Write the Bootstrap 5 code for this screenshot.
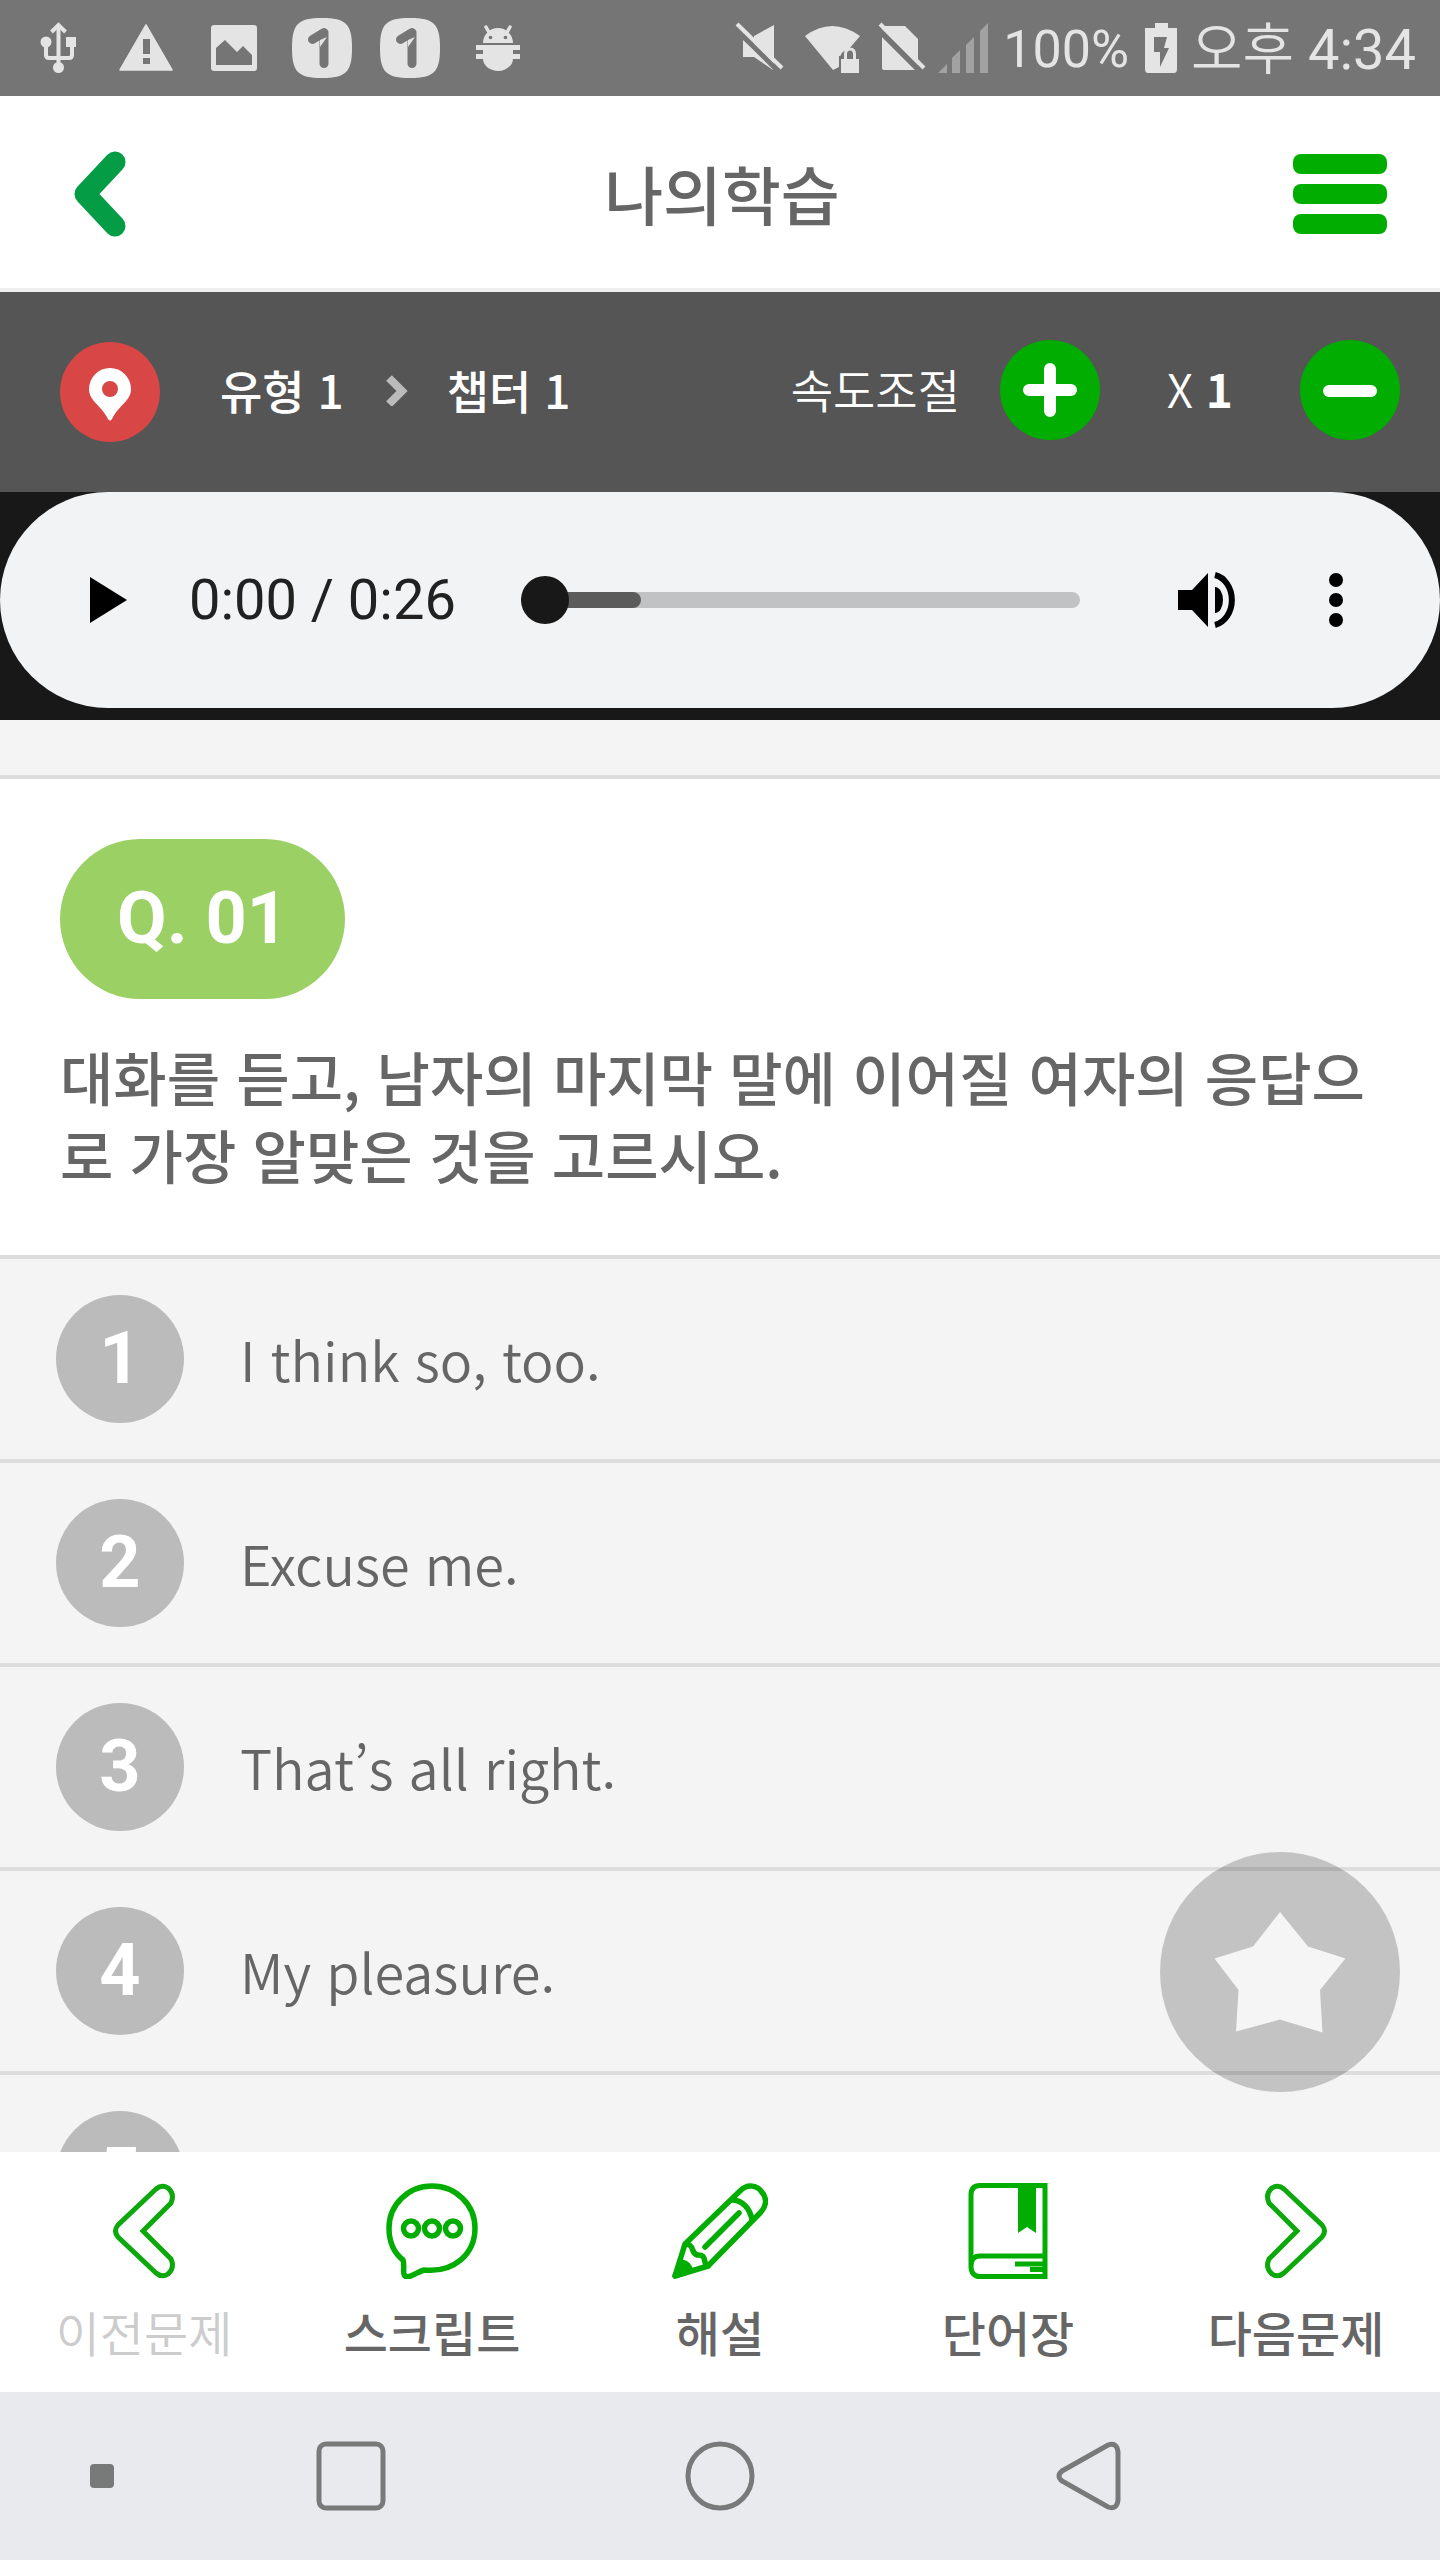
<!DOCTYPE html>
<html lang="ko">
<head>
<meta charset="utf-8">
<meta name="viewport" content="width=device-width, initial-scale=1">
<title>나의학습</title>
<link href="https://cdn.jsdelivr.net/npm/bootstrap@5.3.0/dist/css/bootstrap.min.css" rel="stylesheet">
<style>
  :root { --ink: #666; --line: #ddd; --soft: #f4f4f4; }
  body { font-family: "Noto Sans CJK KR", "Noto Sans", sans-serif; color: var(--ink); background: var(--soft); }
  svg { display: block; flex: none; }
  .statusbar { height: 96px; padding: 0 24px 0 28px; background: #757575; color: #e4e4e4; font-family: Roboto, "Noto Sans CJK KR", sans-serif; }
  .status-left { gap: 28px; }
  .battery-text { font-size: 52px; line-height: 60px; padding-top: 4px; margin: 0 14px; }
  .clock { font-size: 56px; line-height: 60px; font-weight: 400; padding-top: 4px; margin-left: 12px; }
  .clock span { font-weight: 350; }
  .titlebar { height: 196px; padding: 0 50px; border-bottom: 4px solid #efefef; }
  .titlebar h1 { font-size: 64px; line-height: 96px; font-weight: 500; }
  .locbar { height: 200px; padding: 0 40px 0 60px; background: #555; font-size: 46px; line-height: 72px; }
  .crumb-list { gap: 38px; font-weight: 500; margin-left: 60px; padding-bottom: 6px; }
  .speed { font-weight: 350; padding-bottom: 4px; }
  .speed-value { width: 200px; }
  .speed-label, .speed-value { padding-bottom: 4px; }
  .speed-label { margin-right: 40px; }
  .audio-wrap { background: #181818; padding-bottom: 12px; }
  .audio-pill { height: 216px; background: #f1f3f4; padding: 0 68px 0 72px; }
  .audio-time { font: 400 56px/64px Roboto, sans-serif; color: #212121; margin: 0 65px 0 45px; }
  .seek { height: 48px; margin-right: 84px; }
  .seek .progress { height: 16px; border-radius: 8px; background: #c1c2c4; }
  .seek .progress-bar { background: #5b5b5b; border-radius: 8px; }
  .seek input { position: absolute; inset: 0; width: 100%; height: 48px; margin: 0; appearance: none; background: transparent; }
  .seek input::-webkit-slider-thumb { appearance: none; width: 48px; height: 48px; border-radius: 50%; background: #181818; }
  .lesson { min-height: 0; }
  .question { margin-top: 55px; padding: 60px 40px 62px 60px; background: #fff; border-top: 4px solid var(--line); border-bottom: 4px solid var(--line); }
  .qno { height: 160px; padding: 0 57px; border-radius: 80px; background: #9ad064; color: #fff; font: 700 72px/160px Roboto, sans-serif; }
  .question p { font-size: 58px; line-height: 78px; font-weight: 500; margin: 38px 0 0; }
  .choice { height: 204px; padding: 0 56px; gap: 56px; background: var(--soft); border: 0; border-bottom: 4px solid var(--line); border-radius: 0; font-size: 54px; line-height: 72px; font-weight: 350; color: var(--ink); }
  .num { width: 128px; height: 128px; background: #bbb; color: #fff; font: 700 72px/128px Roboto, sans-serif; flex: none; }
  .fav { position: absolute; right: 40px; bottom: 60px; }
  .toolbar-item { padding: 31px 0 0; color: var(--ink); font-size: 48px; line-height: 72px; font-weight: 500; gap: 16px; }
  .toolbar-item.off { color: #ccc; font-weight: 350; }
  .tools { height: 240px; }
  .sysnav { height: 168px; background: #e9eaed; display: grid; grid-template-columns: 204fr 294fr 444fr 294fr 204fr; }
</style>
<script src="https://cdn.jsdelivr.net/npm/bootstrap@5.3.0/dist/js/bootstrap.bundle.min.js"></script>
</head>
<body>
<div class="d-flex flex-column vh-100 overflow-hidden">

  <div class="statusbar d-flex align-items-center justify-content-between flex-shrink-0">
    <div class="status-left d-flex">
      <!-- usb -->
      <svg width="60" height="60" fill="#e4e4e4"><g fill="none" stroke="#e4e4e4" stroke-width="4"><path d="M30.500 50V10M18 28v9q0 3 3 3h20q3 0 3-3v-9"/><path d="M23.500 14l7-7 7 7"/></g><circle cx="18" cy="24" r="5.500"/><path d="M38 19h10v10H38z"/><circle cx="30.500" cy="49.500" r="5.500"/></svg>
      <!-- warning -->
      <svg width="60" height="60"><path d="M30 7L56 52H4z" fill="#e4e4e4" stroke="#e4e4e4" stroke-width="1.500" stroke-linejoin="round"/><path d="M27 21h7v15h-7zM27 40h7v6h-7z" fill="#757575"/></svg>
      <!-- picture -->
      <svg width="60" height="60"><rect x="7" y="7" width="46" height="46" rx="3" fill="#e4e4e4"/><path d="M12 47V30l9-8 12 12 6-6 9 9v10z" fill="#757575"/></svg>
      <svg width="60" height="60"><path d="M30 0C54 0 60 6 60 30S54 60 30 60 0 54 0 30 6 0 30 0z" fill="#e4e4e4"/><path d="M20.500 21.500L32 14.500V45.500" fill="none" stroke="#757575" stroke-width="9" stroke-linecap="round" stroke-linejoin="round"/><path d="M35 19L28 29v-7z" fill="#e4e4e4"/></svg>
      <svg width="60" height="60"><path d="M30 0C54 0 60 6 60 30S54 60 30 60 0 54 0 30 6 0 30 0z" fill="#e4e4e4"/><path d="M20.500 21.500L32 14.500V45.500" fill="none" stroke="#757575" stroke-width="9" stroke-linecap="round" stroke-linejoin="round"/><path d="M35 19L28 29v-7z" fill="#e4e4e4"/></svg>
      <!-- debug robot -->
      <svg width="60" height="60"><path d="M15 25a15 15 0 0 1 30 0zM8 27h44v5h-7v4h7v5h-7c0 7-8 12-15 12s-15-5-15-12H8v-5h7v-4H8z" fill="#e4e4e4"/><path d="M18 9l4 7M42 9l-4 7" stroke="#e4e4e4" stroke-width="3.500" stroke-linecap="round"/><circle cx="22.500" cy="19.500" r="1.800" fill="#757575"/><circle cx="37.500" cy="19.500" r="1.800" fill="#757575"/></svg>
    </div>
    <div class="d-flex align-items-center">
      <!-- mute, locked wifi, no sim, signal -->
      <svg width="256" height="60" fill="#e4e4e4">
        <path d="M10 22v17h11l19 13h3zM21 18L41 7v45L21 28z"/><path d="M1 9L45 53" stroke="#757575" stroke-width="5"/><path d="M4 6L49 50" stroke="#e4e4e4" stroke-width="4"/>
        <path d="M72 18q27-20 55 0l-11 13q-11 2-10 18l-6 3z"/><path d="M106 38h23v18h-23z" fill="#757575"/><path d="M108 41h18v14h-18z"/><path d="M112.500 43v-7q0-5 4.500-5t4.500 5v7" fill="none" stroke="#e4e4e4" stroke-width="3"/>
        <path d="M149 8h23l13 13v31h-34q-2 0-2-2z"/><path d="M143 9L187 53" stroke="#757575" stroke-width="6"/><path d="M147 6L191 50" stroke="#e4e4e4" stroke-width="4"/>
        <path d="M205 55l9-9v9zM219 55V40l8-8v23zM233 55V27l8-8v36zM247 55V13l8-8v50z" fill="#a2a2a2"/>
      </svg>
      <span class="battery-text">100%</span>
      <svg width="36" height="60"><path d="M12 5h13v5h9v41q0 4-3 4H5q-3 0-3-4V10h10z" fill="#e4e4e4"/><path d="M11 19h13l-3 11h5l-9 19V34h-6z" fill="#757575"/></svg>
      <span class="clock"><span>오후</span> 4:34</span>
    </div>
  </div>

  <header class="titlebar bg-white d-flex align-items-center justify-content-between flex-shrink-0">
    <button class="btn p-0 border-0" aria-label="뒤로"><svg width="100" height="100"><path d="M65 20L35 52 65 84" fill="none" stroke="#049c45" stroke-width="21" stroke-linecap="round" stroke-linejoin="round"/></svg></button>
    <h1 class="m-0 ps-1">나의학습</h1>
    <button class="btn p-0 border-0" aria-label="메뉴"><svg width="100" height="100" fill="#00ad00"><rect x="3" y="12" width="94" height="20" rx="8"/><rect x="3" y="42" width="94" height="20" rx="8"/><rect x="3" y="72" width="94" height="20" rx="8"/></svg></button>
  </header>

  <div class="locbar text-white d-flex align-items-center flex-shrink-0">
    <svg width="100" height="100"><circle cx="50" cy="50" r="50" fill="#d84646"/><path fill-rule="evenodd" d="M50 26a21 21 0 0 1 21 21c0 12-12 16-19 30q-2 3-4 0C41 63 29 59 29 47A21 21 0 0 1 50 26zm0 13a8 8 0 1 0 0 16 8 8 0 0 0 0-16z" fill="#fff"/></svg>
    <nav class="crumb-list d-flex align-items-center">
      <span>유형 1</span>
      <svg width="27" height="34"><path d="M7 6l13 13L7 32" fill="none" stroke="#bbb" stroke-width="8"/></svg>
      <span>챕터 1</span>
    </nav>
    <div class="speed d-flex align-items-center ms-auto">
      <span class="speed-label">속도조절</span>
      <button class="btn p-0 border-0" aria-label="빠르게"><svg width="100" height="100"><circle cx="50" cy="50" r="50" fill="#00ad00"/><path d="M50 29v42M29 50h42" stroke="#fff" stroke-width="12" stroke-linecap="round"/></svg></button>
      <span class="speed-value text-center">X <b class="fw-bold">1</b></span>
      <button class="btn p-0 border-0" aria-label="느리게"><svg width="100" height="100"><circle cx="50" cy="50" r="50" fill="#00ad00"/><path d="M29 51h42" stroke="#fff" stroke-width="12" stroke-linecap="round"/></svg></button>
    </div>
  </div>

  <div class="audio-wrap flex-shrink-0">
    <div class="audio-pill rounded-pill d-flex align-items-center">
      <button class="btn p-0 border-0" aria-label="재생"><svg width="72" height="72"><path d="M18 13v46l37-23z"/></svg></button>
      <span class="audio-time">0:00 / 0:26</span>
      <div class="seek position-relative flex-grow-1 d-flex align-items-center">
        <div class="progress flex-grow-1"><div class="progress-bar" style="width:21.5%"></div></div>
        <input type="range" min="0" max="26" value="0" aria-label="재생 위치">
      </div>
      <button class="btn p-0 border-0" aria-label="음량"><svg width="88" height="72"><path d="M14 26h14L44 9v54L28 46H14z"/><path d="M51 23a8 13 0 0 1 0 26z"/><path d="M51 11a21 25.500 0 0 1 0 50" fill="none" stroke="#000" stroke-width="6"/></svg></button>
      <button class="btn p-0 border-0 ms-5" aria-label="더보기"><svg width="72" height="72"><circle cx="36" cy="16" r="7"/><circle cx="36" cy="36" r="7"/><circle cx="36" cy="56" r="7"/></svg></button>
    </div>
  </div>

  <main class="lesson position-relative flex-grow-1 overflow-hidden">
    <section class="question">
      <span class="qno d-inline-block align-top">Q. 01</span>
      <p>대화를 듣고, 남자의 마지막 말에 이어질 여자의 응답으로 가장 알맞은 것을 고르시오.</p>
    </section>
    <div class="d-flex flex-column">
      <button class="choice btn d-flex align-items-center text-start"><span class="num rounded-circle text-center">1</span><span>I think so, too.</span></button>
      <button class="choice btn d-flex align-items-center text-start"><span class="num rounded-circle text-center">2</span><span>Excuse me.</span></button>
      <button class="choice btn d-flex align-items-center text-start"><span class="num rounded-circle text-center">3</span><span>That’s all right.</span></button>
      <button class="choice btn d-flex align-items-center text-start"><span class="num rounded-circle text-center">4</span><span>My pleasure.</span></button>
      <button class="choice btn d-flex align-items-center text-start"><span class="num rounded-circle text-center">5</span></button>
    </div>
    <button class="fav btn p-0 border-0 rounded-circle" aria-label="즐겨찾기"><svg width="240" height="240"><circle cx="120" cy="120" r="120" fill="#000" fill-opacity=".2"/><path d="M120 60l28 34.500 37.500 12L160 138l2.500 42.500L120 167.500 76 179.500 78.500 138 54.500 106.500 93 94.500z" fill="#f5f5f5"/></svg></button>
  </main>

  <nav class="tools row g-0 bg-white flex-shrink-0">
    <a href="#" class="toolbar-item off col d-flex flex-column align-items-center text-decoration-none">
      <svg width="96" height="96" fill="none" stroke="#0ca80c" stroke-width="5"><path d="M60 6Q66 1 72 5q7 6 3 15L47 48 75 76q4 9-3 15-6 4-12-1L22 54Q17 48 22 42z"/></svg>
      이전문제</a>
    <a href="#" class="toolbar-item col d-flex flex-column align-items-center text-decoration-none">
      <svg width="96" height="96" fill="none" stroke="#00ad00" stroke-width="5.500"><path d="M48 3a43 42 0 0 1 43 42c0 26-21 45-51 42-7 2-15 9-19 6-3-3 0-10-2-16C9 69 5 58 5 45A43 42 0 0 1 48 3z"/><circle cx="27" cy="45.500" r="7.500"/><circle cx="48" cy="45.500" r="7.500"/><circle cx="69" cy="45.500" r="7.500"/></svg>
      스크립트</a>
    <a href="#" class="toolbar-item col d-flex flex-column align-items-center text-decoration-none">
      <svg width="96" height="96" fill="none" stroke="#00ad00" stroke-width="5.500" stroke-linejoin="round" stroke-linecap="round"><path d="M3 93L13 61 68 8c8-8 17-5 21 0 5 5 7 13 0 21L36 83z"/><path d="M60 17c10 0 18 8 20 20M67 30L33 64M14 61c9 1 4 8 11 11 11-1 5 9 11 11"/><path d="M3 93l6-14c5 1 9 3 9 9z" fill="#00ad00"/></svg>
      해설</a>
    <a href="#" class="toolbar-item col d-flex flex-column align-items-center text-decoration-none">
      <svg width="96" height="96" fill="none" stroke="#00ad00" stroke-width="5"><path d="M85 93.500H20c-6 0-9-4-9-10V12c0-6 3-9.500 9-9.500h65zM11 84c0-8 3-11 9-11h65M55 81h30M70 86.500h15"/><path d="M58 2h18v48l-9-6-9 6z" fill="#00ad00" stroke="none"/></svg>
      단어장</a>
    <a href="#" class="toolbar-item col d-flex flex-column align-items-center text-decoration-none">
      <svg width="96" height="96" fill="none" stroke="#0ca80c" stroke-width="5"><path d="M36 6Q30 1 24 5q-7 6-3 15L49 48 21 76q-4 9 3 15 6 4 12-1L74 54q5-6 0-12z"/></svg>
      다음문제</a>
  </nav>

  <div class="sysnav flex-shrink-0 align-items-center">
    <svg class="mx-auto" width="24" height="24"><rect width="24" height="24" rx="4" fill="#787a7a"/></svg>
    <svg class="mx-auto" width="70" height="70"><rect x="3" y="3" width="64" height="64" rx="7" fill="none" stroke="#787a7a" stroke-width="5"/></svg>
    <svg class="mx-auto" width="70" height="70"><circle cx="35" cy="35" r="32" fill="none" stroke="#787a7a" stroke-width="5"/></svg>
    <svg class="mx-auto" width="70" height="70"><path d="M8 30L54 4q9-3 10 7v48q-1 10-10 7L8 40q-6-5 0-10z" fill="none" stroke="#787a7a" stroke-width="5"/></svg>
    <span></span>
  </div>
</div>
</body>
</html>
